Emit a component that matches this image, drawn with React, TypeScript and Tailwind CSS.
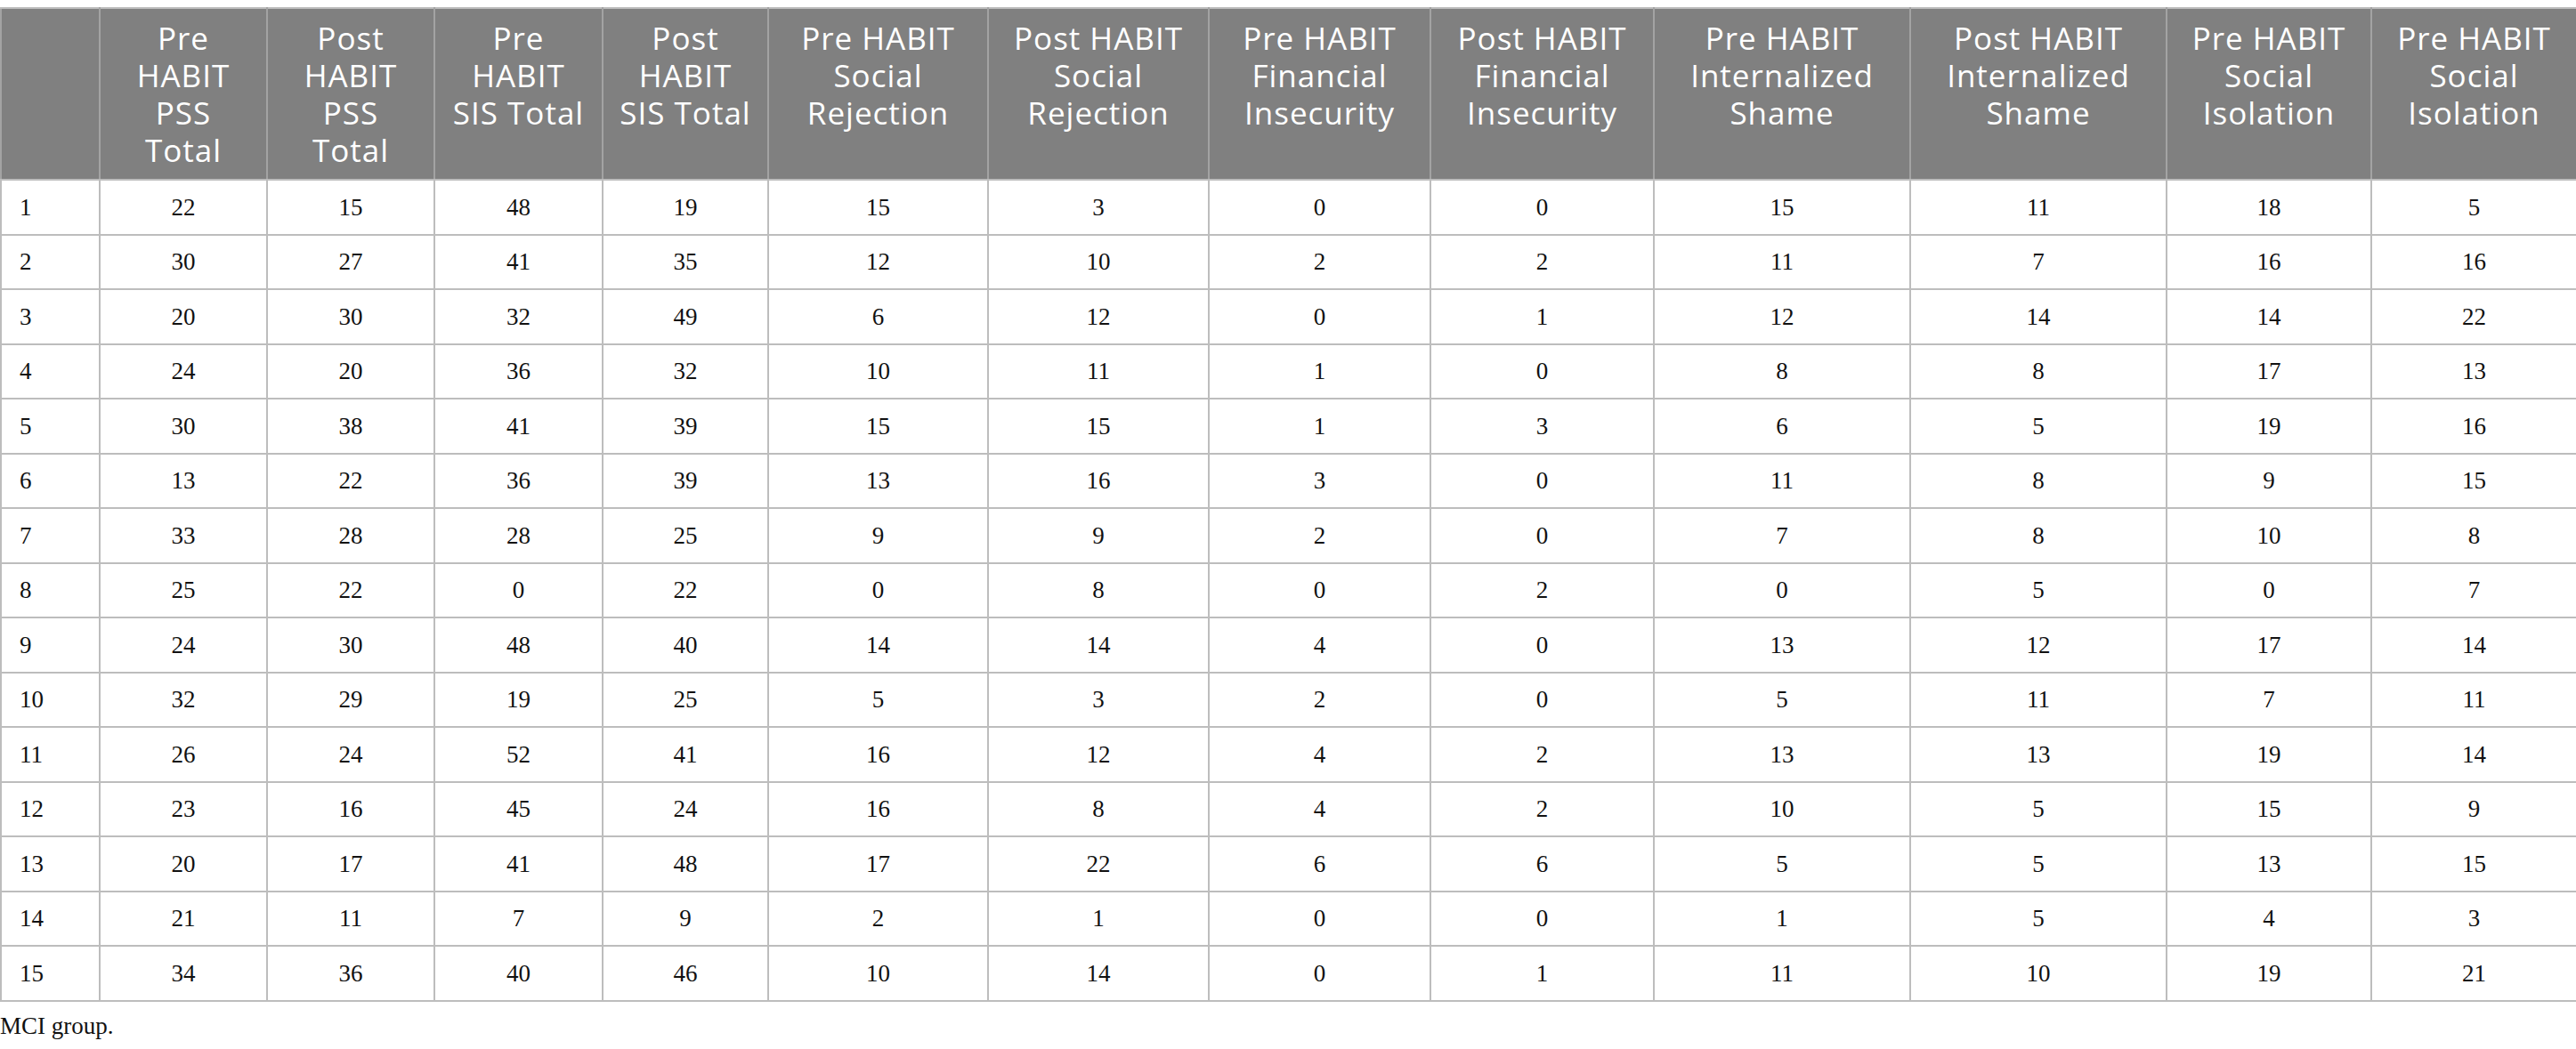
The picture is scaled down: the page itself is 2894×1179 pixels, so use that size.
const headers = [
  "",
  "Pre HABIT PSS Total",
  "Post HABIT PSS Total",
  "Pre HABIT SIS Total",
  "Post HABIT SIS Total",
  "Pre HABIT Social Rejection",
  "Post HABIT Social Rejection",
  "Pre HABIT Financial Insecurity",
  "Post HABIT Financial Insecurity",
  "Pre HABIT Internalized Shame",
  "Post HABIT Internalized Shame",
  "Pre HABIT Social Isolation",
  "Pre HABIT Social Isolation",
];

const widths = [111, 188, 188, 189, 186, 247, 248, 249, 251, 288, 288, 230, 231];

const rows: number[][] = [
  [1, 22, 15, 48, 19, 15, 3, 0, 0, 15, 11, 18, 5],
  [2, 30, 27, 41, 35, 12, 10, 2, 2, 11, 7, 16, 16],
  [3, 20, 30, 32, 49, 6, 12, 0, 1, 12, 14, 14, 22],
  [4, 24, 20, 36, 32, 10, 11, 1, 0, 8, 8, 17, 13],
  [5, 30, 38, 41, 39, 15, 15, 1, 3, 6, 5, 19, 16],
  [6, 13, 22, 36, 39, 13, 16, 3, 0, 11, 8, 9, 15],
  [7, 33, 28, 28, 25, 9, 9, 2, 0, 7, 8, 10, 8],
  [8, 25, 22, 0, 22, 0, 8, 0, 2, 0, 5, 0, 7],
  [9, 24, 30, 48, 40, 14, 14, 4, 0, 13, 12, 17, 14],
  [10, 32, 29, 19, 25, 5, 3, 2, 0, 5, 11, 7, 11],
  [11, 26, 24, 52, 41, 16, 12, 4, 2, 13, 13, 19, 14],
  [12, 23, 16, 45, 24, 16, 8, 4, 2, 10, 5, 15, 9],
  [13, 20, 17, 41, 48, 17, 22, 6, 6, 5, 5, 13, 15],
  [14, 21, 11, 7, 9, 2, 1, 0, 0, 1, 5, 4, 3],
  [15, 34, 36, 40, 46, 10, 14, 0, 1, 11, 10, 19, 21],
];

export default function App() {
  return (
    <div className="bg-white w-[2894px] pt-[8px]">
      <table className="table-fixed border-collapse w-[2894px] font-['Liberation_Serif',serif] text-[27px] text-[#111]">
        <colgroup>
          {widths.map((w, i) => (
            <col key={i} style={{ width: w }} />
          ))}
        </colgroup>
        <thead>
          <tr className="bg-[#808080] h-[193px]">
            {headers.map((h, i) => (
              <th
                key={i}
                className="border-2 border-t-[#bdbdbd] border-x-[#a3a3a3] border-b-[#bdbdbd] align-top px-[16px] pt-[12px] font-['Open_Sans',sans-serif] font-normal text-[35px] leading-[42px] tracking-[1px] text-white text-center"
              >
                {h}
              </th>
            ))}
          </tr>
        </thead>
        <tbody>
          {rows.map((r) => (
            <tr key={r[0]} className="h-[61.5px]">
              {r.map((v, i) => (
                <td
                  key={i}
                  className={
                    "border-2 border-[#bdbdbd] align-middle " +
                    (i === 0 ? "text-left pl-[20px]" : "text-center")
                  }
                >
                  {v}
                </td>
              ))}
            </tr>
          ))}
        </tbody>
      </table>
      <p className="mt-[9px] font-['Liberation_Serif',serif] text-[27px] leading-[36px] text-[#111]">
        MCI group.
      </p>
    </div>
  );
}
